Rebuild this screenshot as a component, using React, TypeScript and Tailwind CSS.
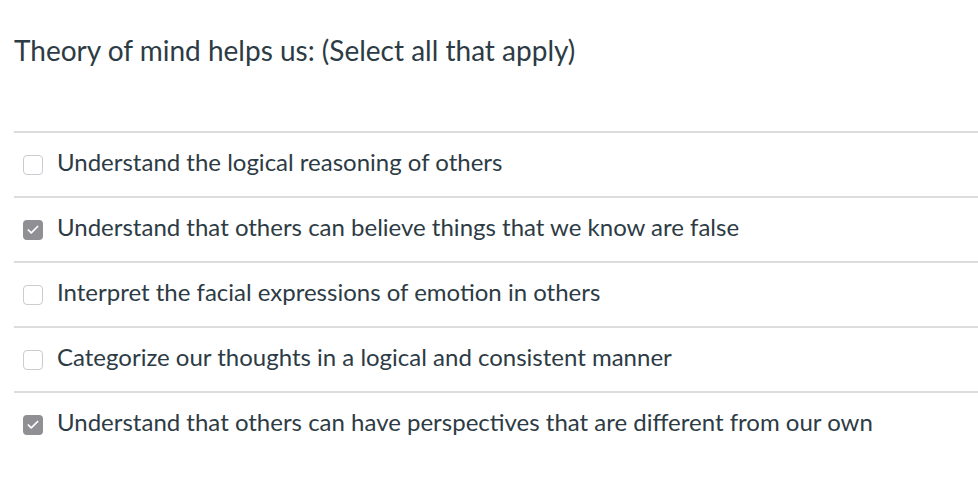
import { Check } from "lucide-react";

const options = [
  { label: "Understand the logical reasoning of others", checked: false },
  { label: "Understand that others can believe things that we know are false", checked: true },
  { label: "Interpret the facial expressions of emotion in others", checked: false },
  { label: "Categorize our thoughts in a logical and consistent manner", checked: false },
  { label: "Understand that others can have perspectives that are different from our own", checked: true },
];

export default function App() {
  return (
    <div className="w-[978px] h-[480px] bg-white text-[#2d3b45] font-['Lato','Liberation_Sans',sans-serif] overflow-hidden">
      <div className="pl-[14px] pt-[31px] h-[131px]">
        <h1 className="text-[28px] leading-[38px]">Theory of mind helps us: (Select all that apply)</h1>
      </div>
      <div className="ml-[14px]">
        {options.map((o) => (
          <div key={o.label} className="h-[65px] border-t-2 border-[#dcdcdc] flex items-center pl-[9px]">
            {o.checked ? (
              <span className="w-[20px] h-[20px] rounded-[4px] bg-[#8f8f94] flex items-center justify-center">
                <Check className="w-[14px] h-[14px] text-white" strokeWidth={3} />
              </span>
            ) : (
              <span className="w-[20px] h-[20px] rounded-[4px] border border-[#c7cdd1] bg-white" />
            )}
            <span className="ml-[14px] text-[24px] leading-[30px] -mt-[5px]">{o.label}</span>
          </div>
        ))}
      </div>
    </div>
  );
}
